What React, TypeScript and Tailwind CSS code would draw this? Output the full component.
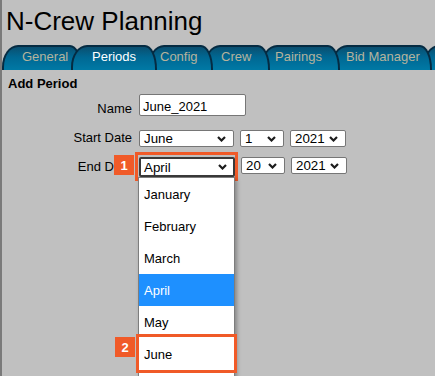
const TABS = [
  { label: "General", w: "w-[80px]", ml: "", pl: "pl-[18px]", z: "z-[6]" },
  { label: "Periods", w: "w-[86px]", ml: "-ml-[11px]", pl: "pl-[19px]", z: "z-[10]", active: true },
  { label: "Config", w: "w-[65px]", ml: "-ml-[9px]", pl: "pl-[10px]", z: "z-[5]" },
  { label: "Crew", w: "w-[66px]", ml: "-ml-[9px]", pl: "pl-[15px]", z: "z-[4]" },
  { label: "Pairings", w: "w-[79px]", ml: "-ml-[9px]", pl: "pl-[12px]", z: "z-[3]" },
  { label: "Bid Manager", w: "w-[101px]", ml: "-ml-[9px]", pl: "pl-[13px]", z: "z-[2]" },
  { label: "", w: "w-[60px]", ml: "-ml-[9px]", pl: "pl-[12px]", z: "z-[1]" },
];

const MONTHS = ["January", "February", "March", "April", "May", "June", "July"];

function Chevron() {
  return (
    <svg width="9" height="6" viewBox="0 0 9 6" className="shrink-0">
      <path d="M1 1 L4.5 4.5 L8 1" fill="none" stroke="#1c1c1c" strokeWidth="2.2" />
    </svg>
  );
}

function Select({ value, w }: { value: string; w: string }) {
  return (
    <div
      className={`${w} h-[17px] flex items-center justify-between border border-[#767676] rounded-[2px] bg-white pl-[4px] pr-[7px] text-[13.33px] leading-[15px]`}
    >
      <span>{value}</span>
      <Chevron />
    </div>
  );
}

function Badge({ n, className }: { n: string; className: string }) {
  return (
    <div
      className={`absolute ${className} w-[20px] h-[20px] bg-[#f05a28] text-white font-bold text-[13px] leading-[15px] flex items-center justify-center`}
    >
      {n}
    </div>
  );
}

export default function App() {
  return (
    <div className="h-[376px] w-[435px] overflow-hidden bg-[#c0c0c0] border-l-2 border-[#7a7a7a] font-['Liberation_Sans',Arial,sans-serif] text-black">
      <h1 className="pl-[4px] pt-[7px] text-[26px] leading-[28px] font-normal">N-Crew Planning</h1>

      <div className="mt-[10px] flex h-[25px] overflow-hidden">
        {TABS.map((t, i) => (
          <div
            key={i}
            className={`relative ${t.z} ${t.w} ${t.ml} ${t.pl} shrink-0 h-[25px] pt-[2px] border-t-2 border-l-2 border-r-2 border-[#052b42] rounded-tl-[16px_22px] rounded-tr-[12px_24px] bg-[linear-gradient(to_bottom,#0a4f70,#006893_45%,#0079a5)] text-[13px] leading-[15px] whitespace-nowrap ${
              t.active ? "text-white" : "text-[#b6b39c]"
            }`}
          >
            {t.label}
          </div>
        ))}
      </div>

      <div className="mt-[6px] pl-[6px] text-[13px] font-bold leading-[15px]">Add Period</div>

      <div className="mt-[3px] flex items-start gap-[7px]">
        <div className="w-[130px] mt-[7px] text-right text-[13px] leading-[15px]">Name</div>
        <div className="w-[107px] h-[22px] border border-[#767676] rounded-[2px] bg-white pl-[3px] pt-[4px] text-[13px] leading-[15px]">
          June_2021
        </div>
      </div>

      <div className="mt-[14px] flex items-start gap-[7px]">
        <div className="w-[130px] text-right text-[13px] leading-[15px]">Start Date</div>
        <div className="flex gap-[6px]">
          <Select value="June" w="w-[95px]" />
          <Select value="1" w="w-[44px]" />
          <Select value="2021" w="w-[56px]" />
        </div>
      </div>

      <div className="mt-[10px] flex items-start gap-[7px]">
        <div className="w-[130px] mt-[2px] text-right text-[13px] leading-[15px]">End Date</div>
        <div className="flex items-start gap-[6px]">
          <div className="relative">
            <div className="w-[96px] h-[20px] flex items-center justify-between border-2 border-[#3a3a3a] rounded-[2px] bg-white pl-[3px] pr-[6px] text-[13.33px] leading-[15px]">
              <span>April</span>
              <Chevron />
            </div>
            <div className="absolute -left-[4px] -top-[5px] -right-[3px] -bottom-[4px] border-[3px] border-[#f05a28]" />
            <Badge n="1" className="-left-[25px] -top-[2px]" />

            <div className="absolute left-[-1px] top-full w-[97px] border border-[#7d7d7d] bg-white shadow-[2px_2px_4px_rgba(0,0,0,0.3)] z-20">
              {MONTHS.map((m) => (
                <div
                  key={m}
                  className={`relative h-[32px] flex items-center pl-[5px] text-[13px] leading-[15px] ${
                    m === "April" ? "bg-[#1e90ff] text-white" : "text-black"
                  }`}
                >
                  {m}
                  {m === "June" && (
                    <>
                      <div className="absolute -left-[3px] -right-[3px] -top-[4px] -bottom-[3px] border-[3px] border-[#f05a28]" />
                      <Badge n="2" className="-left-[24px] -top-[1px]" />
                    </>
                  )}
                </div>
              ))}
            </div>
          </div>
          <Select value="20" w="w-[44px]" />
          <Select value="2021" w="w-[56px]" />
        </div>
      </div>
    </div>
  );
}
